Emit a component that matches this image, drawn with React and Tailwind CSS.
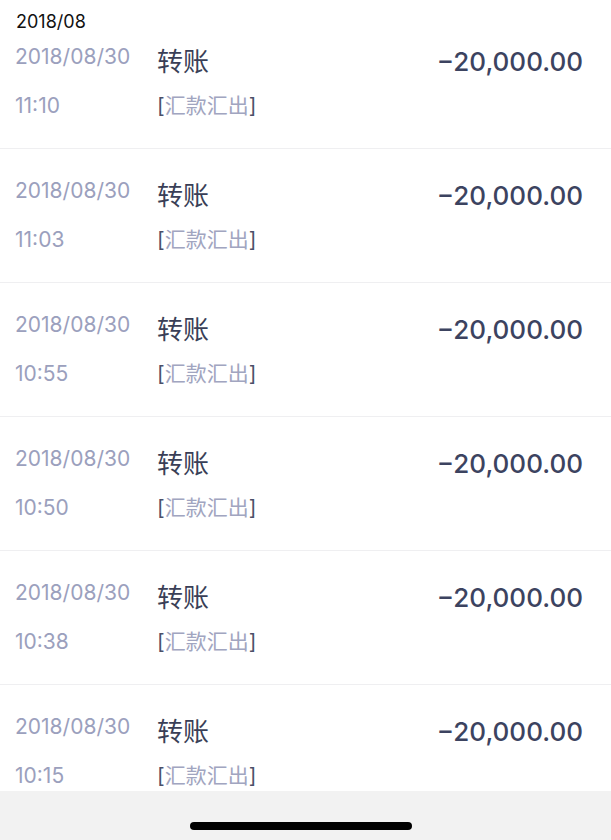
const rows = [
  { date: "2018/08/30", time: "11:10" },
  { date: "2018/08/30", time: "11:03" },
  { date: "2018/08/30", time: "10:55" },
  { date: "2018/08/30", time: "10:50" },
  { date: "2018/08/30", time: "10:38" },
  { date: "2018/08/30", time: "10:15" },
]

function Row({ item }) {
  return (
    <div className="flex h-[134px] shrink-0 border-b border-[#efeff1] bg-white">
      <div className="w-[157px] pl-[15px] pt-[28px] text-[21px] text-[#9ba0bd]">
        <div className="leading-[28px]">{item.date}</div>
        <div className="mt-[21px] leading-[28px]">{item.time}</div>
      </div>
      <div className="flex-1 pt-[31px]">
        <div className="text-[26px] leading-[32px] text-[#3a3f57]">转账</div>
        <div className="mt-[14px] text-[21px] leading-[28px] text-[#a1a5c0]">
          <span className="text-[#4b5068]">[</span>汇款汇出<span className="text-[#4b5068]">]</span>
        </div>
      </div>
      <div className="pr-[28px] pt-[31px] text-[26px] font-medium leading-[32px] text-[#3c4360]">
        −20,000.00
      </div>
    </div>
  )
}

export default function App() {
  return (
    <div
      className="flex h-[840px] w-full flex-col bg-white"
      style={{ fontFamily: 'Inter, "Noto Sans CJK SC", sans-serif' }}
    >
      <div className="flex-1 overflow-hidden">
        <div className="relative z-10 h-[36px] pl-[16px] pt-[10px] text-[18px] leading-[24px] text-[#111]">
          2018/08
        </div>
        <div className="-mt-[21px] flex flex-col">
          {rows.map((item, i) => (
            <Row key={i} item={item} />
          ))}
        </div>
      </div>
      <div className="h-[49px] shrink-0 bg-[#f2f2f2] pt-[31px]">
        <div className="ml-[190px] h-[8px] w-[222px] rounded-full bg-black"></div>
      </div>
    </div>
  )
}
